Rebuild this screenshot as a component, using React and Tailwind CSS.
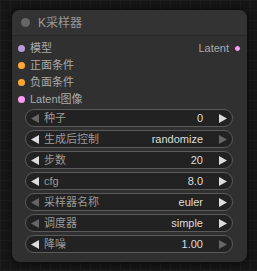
import React from "react";

const inputs = [
  { label: "模型", color: "bg-[#b39ddb]" },
  { label: "正面条件", color: "bg-[#ffa931]" },
  { label: "负面条件", color: "bg-[#ffa931]" },
  { label: "Latent图像", color: "bg-[#ff9cf9]" },
];

const widgets = [
  { label: "种子", value: "0", left: false, right: true },
  { label: "生成后控制", value: "randomize", left: true, right: false },
  { label: "步数", value: "20", left: true, right: true },
  { label: "cfg", value: "8.0", left: true, right: true },
  { label: "采样器名称", value: "euler", left: false, right: true },
  { label: "调度器", value: "simple", left: false, right: true },
  { label: "降噪", value: "1.00", left: true, right: false },
];

function Arrow({ dir, active }) {
  const fill = active ? "#dddddd" : "#666666";
  return (
    <svg width="8" height="9" viewBox="0 0 8 9" className="shrink-0">
      {dir === "left" ? (
        <polygon points="8,0 8,9 0,4.5" fill={fill} />
      ) : (
        <polygon points="0,0 0,9 8,4.5" fill={fill} />
      )}
    </svg>
  );
}

function Widget({ label, value, left, right }) {
  return (
    <div className="flex items-center h-[18px] w-[208px] rounded-full bg-[#222222] border border-[#5a5a5a] pl-[5px] pr-[5px] text-[11px] leading-none">
      <Arrow dir="left" active={left} />
      <span className="ml-[5px] text-[#9a9a9a]">{label}</span>
      <span className="ml-auto text-[#dddddd]">{value}</span>
      <span className="ml-[16px]">
        <Arrow dir="right" active={right} />
      </span>
    </div>
  );
}

export default function App() {
  return (
    <div
      className="w-[257px] h-[271px] bg-[#161616] bg-[linear-gradient(#1e1e1e_1px,transparent_1px),linear-gradient(90deg,#1e1e1e_1px,transparent_1px)] bg-[size:10px_10px] pt-[10px] pl-[12px] overflow-hidden"
      style={{ fontFamily: '"Liberation Sans", "Noto Sans CJK SC", sans-serif' }}
    >
      <div className="w-[235px] h-[252px] rounded-lg bg-[#303030] shadow-[0_0_6px_2px_rgba(0,0,0,0.5)] overflow-hidden">
        <div className="flex items-center h-[26px] bg-[#333333] border-b border-[#282828]">
          <div className="ml-[9px] w-[9px] h-[9px] rounded-full bg-[#666666]" />
          <span className="ml-[8px] text-[12px] text-[#9a9a9a]">K采样器</span>
        </div>
        <div className="pt-[4px]">
          {inputs.map((inp, i) => (
            <div key={inp.label} className="flex items-center h-[17px] pl-[6px] pr-[6px]">
              <div className={`w-[7px] h-[7px] rounded-full ${inp.color}`} />
              <span className="ml-[5px] text-[11px] text-[#aaaaaa]">{inp.label}</span>
              {i === 0 && (
                <>
                  <span className="ml-auto text-[11px] text-[#aaaaaa]">Latent</span>
                  <div className="ml-[5px] w-[7px] h-[7px] rounded-full bg-[#ff9cf9] border border-[#222]" />
                </>
              )}
            </div>
          ))}
          <div className="mt-[1px] ml-[13px] flex flex-col gap-[3px]">
            {widgets.map((w) => (
              <Widget key={w.label} {...w} />
            ))}
          </div>
        </div>
      </div>
    </div>
  );
}
